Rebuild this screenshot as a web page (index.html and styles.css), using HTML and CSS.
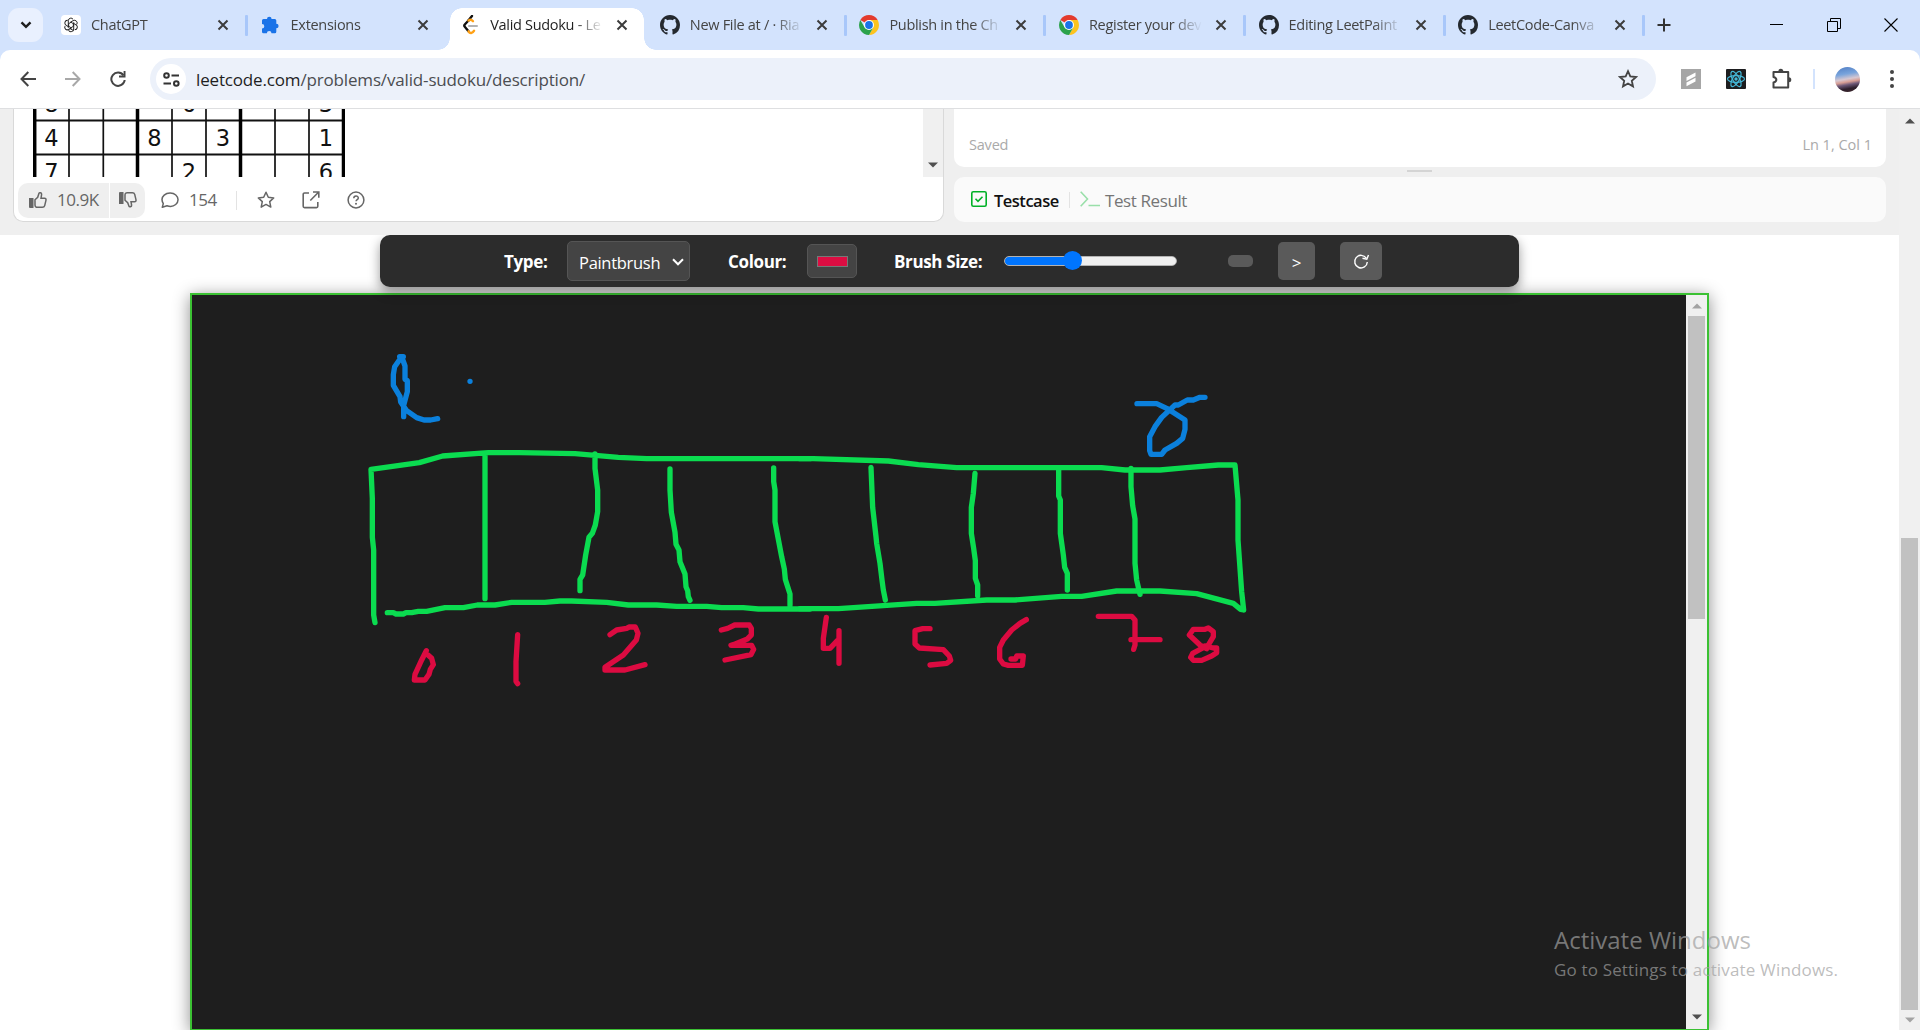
FILE: index.html
```html
<!DOCTYPE html>
<html lang="en">
<head>
<meta charset="utf-8">
<title>Valid Sudoku - LeetCode</title>
<link rel="stylesheet" href="styles.css">
</head>
<body>
<svg class="defs" width="0" height="0" aria-hidden="true">
  <symbol id="x" viewBox="0 0 12 12"><path d="M1.5 1.5l9 9M10.5 1.5l-9 9" stroke="currentColor" stroke-width="2" fill="none"/></symbol>
  <symbol id="github" viewBox="0 0 16 16"><path fill="#24292f" d="M8 0C3.58 0 0 3.58 0 8c0 3.54 2.29 6.53 5.47 7.59.4.07.55-.17.55-.38 0-.19-.01-.82-.01-1.49-2.01.37-2.53-.49-2.69-.94-.09-.23-.48-.94-.82-1.13-.28-.15-.68-.52-.01-.53.63-.01 1.08.58 1.23.82.72 1.21 1.87.87 2.33.66.07-.52.28-.87.51-1.07-1.78-.2-3.64-.89-3.64-3.95 0-.87.31-1.59.82-2.15-.08-.2-.36-1.02.08-2.12 0 0 .67-.21 2.2.82.64-.18 1.32-.27 2-.27s1.36.09 2 .27c1.53-1.04 2.2-.82 2.2-.82.44 1.1.16 1.92.08 2.12.51.56.82 1.27.82 2.15 0 3.07-1.87 3.75-3.65 3.95.29.25.54.73.54 1.48 0 1.07-.01 1.93-.01 2.2 0 .21.15.46.55.38A8.01 8.01 0 0 0 16 8c0-4.42-3.58-8-8-8z"/></symbol>
  <symbol id="chrome" viewBox="0 0 20 20"><path fill="#e33b2e" d="M10 10L1.34 5A10 10 0 0 1 18.66 5z"/><path fill="#fcc31e" d="M10 10V5h8.66A10 10 0 0 1 10 20l4.33-7.5z"/><path fill="#2ba24c" d="M10 10l4.33 2.5L10 20A10 10 0 0 1 1.34 5l4.33 7.5z"/><circle cx="10" cy="10" r="5" fill="#fff"/><circle cx="10" cy="10" r="3.9" fill="#1a73e8"/></symbol>
  <symbol id="up" viewBox="0 0 10 6"><path d="M0 5.5L5 .5l5 5z" fill="currentColor"/></symbol>
  <symbol id="down" viewBox="0 0 10 6"><path d="M0 .5l5 5 5-5z" fill="currentColor"/></symbol>
</svg>

<header class="browser">
  <div class="tabstrip">
    <button class="tab-search"><svg width="12" height="8" viewBox="0 0 12 8"><path d="M1.5 1.3L6 5.8l4.5-4.5" fill="none" stroke="#1f1f1f" stroke-width="2.4"/></svg></button>
    <div class="tabs">
      <div class="tab"><svg class="fav chip" viewBox="0 0 20 20"><g fill="none" stroke="#222" stroke-width="1.1"><g id="petal"><path d="M7 9V5.2a2.9 2.9 0 0 1 5.4-1.4M9 7.1l3.3-1.9a3 3 0 0 1 4 4.3"/></g><use href="#petal" transform="rotate(120 10 10)"/><use href="#petal" transform="rotate(240 10 10)"/><path d="M10 7l2.6 1.5v3L10 13l-2.6-1.5v-3zM7 9v4M9 14l3.5 2M13 11V7"/></g></svg><span class="title">ChatGPT</span><svg class="close"><use href="#x"/></svg></div>
      <div class="tab"><svg class="fav" viewBox="0 0 20 20"><path fill="#1a73e8" d="M1 5.500a1.500 1.500 0 0 1 1.500-1.500H6a2.300 2.300 0 0 1 4.600 0h3.200A1.500 1.500 0 0 1 15.300 5.500V8.700a2.300 2.300 0 0 1 0 4.600v3.500a1.500 1.500 0 0 1-1.500 1.500h-3.300a2.300 2.300 0 0 0-4.600 0H2.500A1.500 1.500 0 0 1 1 16.800v-3.300a2.300 2.300 0 0 0 0-4.600z"/></svg><span class="title">Extensions</span><svg class="close"><use href="#x"/></svg></div>
      <div class="tab active"><svg class="fav" viewBox="0 0 20 20" fill="none" stroke-width="2.4" stroke-linecap="round"><path d="M8.500 5.500L5 9.200a2 2 0 0 0 0 2.800l3.700 4.400" stroke="#111"/><path d="M12 .9L8.200 5.700" stroke="#111"/><path d="M8.500 5.600c1.600-1.200 3-1 4.500.6M8.500 16.300c1.400 2.500 4 2.200 5.600-.6" stroke="#ffa116"/><path d="M9 11h8" stroke="#b3b3b3" stroke-width="2"/></svg><span class="title">Valid Sudoku - Le</span><svg class="close"><use href="#x"/></svg></div>
      <div class="tab nosep"><svg class="fav"><use href="#github"/></svg><span class="title">New File at / · Ria</span><svg class="close"><use href="#x"/></svg></div>
      <div class="tab"><svg class="fav"><use href="#chrome"/></svg><span class="title">Publish in the Ch</span><svg class="close"><use href="#x"/></svg></div>
      <div class="tab"><svg class="fav"><use href="#chrome"/></svg><span class="title">Register your dev</span><svg class="close"><use href="#x"/></svg></div>
      <div class="tab"><svg class="fav"><use href="#github"/></svg><span class="title">Editing LeetPaint</span><svg class="close"><use href="#x"/></svg></div>
      <div class="tab"><svg class="fav"><use href="#github"/></svg><span class="title">LeetCode-Canva</span><svg class="close"><use href="#x"/></svg></div>
    </div>
    <svg class="plus" width="14" height="14" viewBox="0 0 14 14"><path d="M7 .5v13M.5 7h13" stroke="#333" stroke-width="2"/></svg>
    <div class="window-buttons">
      <svg width="14" height="14" viewBox="0 0 14 14"><path d="M0 6.500h13" stroke="#000"/></svg>
      <svg width="14" height="14" viewBox="0 0 14 14"><path d="M.5 3.500h10v10H.5zM3.500 3V.5h10v10H11" fill="none" stroke="#000"/></svg>
      <svg width="14" height="14" viewBox="0 0 14 14"><path d="M.5 .5l13 13M13.500 .5l-13 13" stroke="#000" stroke-width="1.100"/></svg>
    </div>
  </div>
  <div class="toolbar">
    <div class="nav">
      <svg width="16" height="16" viewBox="0 0 16 16"><path d="M8.300 1L1.500 8l6.800 7M1.500 8H16" fill="none" stroke="#444" stroke-width="2"/></svg>
      <svg width="16" height="16" viewBox="0 0 16 16"><path d="M7.700 1l6.800 7-6.800 7M14.500 8H0" fill="none" stroke="#a8a8a8" stroke-width="2"/></svg>
      <svg width="16" height="16" viewBox="0 0 16 16"><path d="M13.500 4.300A6.700 6.700 0 1 0 14.700 9" fill="none" stroke="#444" stroke-width="2"/><path d="M15.500 0v6.500H9V4.600h4.600V0z" fill="#444"/></svg>
    </div>
    <div class="omnibox">
      <span class="site"><svg width="17" height="15" viewBox="0 0 17 15" fill="none" stroke="#333" stroke-width="2"><circle cx="3.500" cy="3.500" r="2.300"/><path d="M8.500 3.500H16M.5 11.500H8"/><circle cx="13.300" cy="11.500" r="2.300"/></svg></span>
      <span class="url">leetcode.com<i>/problems/valid-sudoku/description/</i></span>
      <svg class="bookmark" width="20" height="20" viewBox="0 0 20 20"><path d="M10 2.200l2.300 5.200 5.700.6-4.200 3.800 1.200 5.600L10 14.500l-5 2.900 1.200-5.600L2 8l5.700-.6z" fill="none" stroke="#444" stroke-width="1.800"/></svg>
    </div>
    <div class="extensions">
      <svg width="20" height="20" viewBox="0 0 20 20"><rect width="20" height="20" fill="#a6a6a6"/><path d="M14.500 3.500v3.800L5.500 12V8.300zM14.500 8.700v3.800l-9 4.700v-3.800z" fill="#fff"/></svg>
      <svg width="20" height="20" viewBox="0 0 20 20"><rect width="20" height="20" rx="1" fill="#1d1d1f"/><g fill="none" stroke="#45b8d8" stroke-width="1.200"><ellipse cx="10" cy="10" rx="8.500" ry="3.300"/><ellipse cx="10" cy="10" rx="8.500" ry="3.300" transform="rotate(60 10 10)"/><ellipse cx="10" cy="10" rx="8.500" ry="3.300" transform="rotate(120 10 10)"/></g><circle cx="10" cy="10" r="1.700" fill="#45b8d8"/></svg>
      <svg width="22" height="22" viewBox="0 0 22 22"><path d="M2.500 4h14.700v15.500H2.500v-5c3.800-1 3.800-4.500 0-5.500z" fill="none" stroke="#444" stroke-width="2" stroke-linejoin="round"/><path d="M7.300 3.300a2.500 2.500 0 0 1 5 0zM17.800 9.300a2.500 2.500 0 0 1 0 5z" fill="#444"/></svg>
      <i class="bar"></i>
      <i class="avatar"></i>
      <svg width="6" height="20" viewBox="0 0 6 20" fill="#444"><circle cx="3" cy="3" r="2"/><circle cx="3" cy="10" r="2"/><circle cx="3" cy="17" r="2"/></svg>
    </div>
  </div>
</header>

<main class="page">
  <div class="content">
    <section class="workspace">
      <div class="description">
        <div class="problem">
          <svg class="sudoku" width="312" height="68" viewBox="33 109 312 68">
            <path d="M33 120.500h312M33 154.500h312" stroke="#111" stroke-width="2"/>
            <path d="M69 109v68M103.300 109v68M172 109v68M206 109v68M275 109v68M309 109v68" stroke="#111" stroke-width="1.700"/>
            <path d="M34.700 109v68M137.500 109v68M240.500 109v68M343.500 109v68" stroke="#000" stroke-width="3.500"/>
            <g class="digits"><text x="51.500" y="112">8</text><text x="189" y="112">6</text><text x="326" y="112">3</text><text x="51.500" y="145.500">4</text><text x="154.500" y="145.500">8</text><text x="223" y="145.500">3</text><text x="326" y="145.500">1</text><text x="51.500" y="180">7</text><text x="189" y="180">2</text><text x="326" y="180">6</text></g>
          </svg>
          <div class="inner-scroll"><svg class="arrow"><use href="#down"/></svg></div>
        </div>
        <div class="actions">
          <div class="votes">
            <span class="vote like"><svg width="18" height="18" viewBox="0 0 18 18"><path d="M0 7h4.500v10H1a1 1 0 0 1-1-1z" fill="#666"/><path d="M6 8.800l2.700-2.500L10 2.300c.3-.9 2.800-.9 2.600 1.200l-.6 3.800h3.600c1 0 1.600.8 1.400 1.800l-1.300 5.500c-.3 1.100-1.200 1.700-2.300 1.700H8.200A2.200 2.200 0 0 1 6 14.100z" fill="none" stroke="#666" stroke-width="1.500"/></svg><b>10.9K</b></span>
            <span class="vote"><svg width="18" height="18" viewBox="0 0 18 18"><path d="M0 2a1 1 0 0 1 1-1h3.500v12H0z" fill="#666"/><path d="M6 9.200l2.700 2.500L10 15.200c.3.900 2.800.9 2.600-1.200l-.6-3.300h3.600c1 0 1.600-.8 1.400-1.800l-1.300-5.500c-.3-1.100-1.200-1.700-2.300-1.700H8.200A2.200 2.200 0 0 0 6 3.900z" fill="none" stroke="#666" stroke-width="1.500"/></svg></span>
          </div>
          <span class="comments"><svg width="18" height="17" viewBox="0 0 18 17"><path d="M1.300 15.200l1-3.600C.5 8.600.5 5.500 3.200 3.100 6.300.3 11.900.3 14.800 3c3 2.700 3 7-.1 9.500-2.300 1.900-5.700 2.300-8.700 1.200z" fill="none" stroke="#666" stroke-width="1.500" stroke-linejoin="round"/></svg><b>154</b></span>
          <i class="rule"></i>
          <div class="links">
            <svg width="18" height="18" viewBox="0 0 18 18"><path d="M9 1.200l2.300 5 5.400.7-4 3.700 1.100 5.500L9 13.400l-4.800 2.700 1.100-5.500-4-3.700 5.400-.7z" fill="none" stroke="#666" stroke-width="1.500" stroke-linejoin="round"/></svg>
            <svg width="18" height="18" viewBox="0 0 18 18"><path d="M7 2H2.500A1.300 1.300 0 0 0 1.200 3.300v12a1.300 1.300 0 0 0 1.300 1.300h12a1.300 1.300 0 0 0 1.300-1.300V11M11 1h5.800v5.800M16.500 1.300L8.300 9.500" fill="none" stroke="#666" stroke-width="1.600"/></svg>
            <svg width="18" height="18" viewBox="0 0 18 18"><circle cx="9" cy="9" r="7.900" fill="none" stroke="#666" stroke-width="1.500"/><path d="M6.800 7.200c0-3 4.500-2.900 4.500-.2 0 1.600-2.200 1.600-2.200 3.300" fill="none" stroke="#666" stroke-width="1.500"/><circle cx="9" cy="12.700" r="1" fill="#666"/></svg>
          </div>
        </div>
      </div>
      <div class="right">
        <div class="editor"><span class="saved">Saved</span><span class="cursor">Ln 1, Col 1</span></div>
        <i class="handle"></i>
        <div class="testbar">
          <svg width="16" height="16" viewBox="0 0 16 16"><rect x=".8" y=".8" width="14.400" height="14.400" rx="1.500" fill="none" stroke="#02b128" stroke-width="1.600"/><path d="M4.500 7.800l2.500 2.500 4.500-4.500" fill="none" stroke="#02b128" stroke-width="1.600"/></svg>
          <b class="testcase">Testcase</b>
          <i class="rule"></i>
          <svg class="prompt" width="20" height="16" viewBox="0 0 20 16"><path d="M.7 .7L7.500 8 .7 15.200M8.500 14.500H20" fill="none" stroke="#99dfa9" stroke-width="1.600"/></svg>
          <span class="result">Test Result</span>
        </div>
      </div>
    </section>

    <section class="paint">
      <div class="controls">
        <label class="type">Type:</label>
        <div class="select"><span>Paintbrush</span><svg width="12" height="8" viewBox="0 0 12 8"><path d="M1 1.300l5 5 5-5" fill="none" stroke="#fff" stroke-width="2"/></svg></div>
        <label class="colour">Colour:</label>
        <div class="swatch"><i></i></div>
        <label class="size">Brush Size:</label>
        <div class="slider"><i class="thumb"></i></div>
        <i class="pill"></i>
        <button class="btn next">&gt;</button>
        <button class="btn reload"><svg width="18" height="18" viewBox="0 0 18 18"><path d="M14.300 5.200A6.300 6.300 0 1 0 15.300 9" fill="none" stroke="#fff" stroke-width="1.400"/><path d="M10.500 5.300l4.300 1L16.500 2" fill="none" stroke="#fff" stroke-width="1.400"/></svg></button>
      </div>
      <div class="board">
        <svg class="drawing" viewBox="192 295 1494 734" width="1494" height="734">
          <g transform="translate(360 340) scale(.33333)">
            <g class="blue"><path d="M131 230V196L142 155V122L135 118V78L125 50 104 80 100 104V136L120 170 122 186 140 212 170 233 192 240H212L233 236M119 50H130M330 124h.1"/></g>
            <g class="green"><path d="M45 848L41 825V630L37 592V475L33 388 178 368 248 348 385 338H480L645 341 775 352 860 356H1350M375 340V776M705 342V385L713 450V515L706 555 697 580 687 592 677 645 668 705 660 718V752M930 387V450L934 517 945 577 948 613 957 630 960 665 975 702 978 740 983 752 985 770 990 781M1241 384V425L1245 450V545L1265 650 1273 687 1276 718 1290 762V795M82 818H100L108 822H130L138 818H155L175 814H200L255 803H310L352 795H405L455 787H555L600 783H635L740 787 805 795H890L950 799H1040L1085 803H1150L1195 807H1350"/></g>
            <g class="red"><path d="M199 932L185 960 165 1003 163 1020H195L207 1003 211 988 220 974 215 955 204 945M473 884L468 965V1024L473 1031M750 884L770 870 800 865 808 861H826L834 880 829 900 790 945 735 982V990H795L855 974M1084 870L1103 865 1124 855H1168L1174 865V885L1162 897 1120 914 1113 916H1175L1181 928 1173 944 1095 960"/></g>
          </g>
          <g transform="translate(800 370) scale(.33333)">
            <g class="green"><path d="M0 266H40L265 273 355 284 470 293H905L975 300H1080L1160 293 1255 285H1305L1314 390V510L1325 665 1331 720 1322 718 1300 700 1190 671 1080 663H950L845 679H785L645 690H560L405 700H350L115 716H0M213 292L218 412 228 500 230 520 240 580 246 630 250 660 256 690M525 310L520 370 514 412V490L521 535 526 572V625L533 645V677M776 295V378L781 390V490L790 555 794 592 802 610V660M993 295V350L998 407 1005 447V580L1010 630 1020 673"/></g>
            <g class="red"><path d="M79 742L70 805V835H90L112 812M117 782V880M390 776H368L345 782V822L358 834 430 839 448 858 452 871 440 880 390 885M679 749L660 760 635 780 610 810 599 832V867L610 882 625 886H667L670 858H650L647 867H633M895 739H995L1005 750V825L1001 838M993 809H1080M1220 836L1200 825 1168 795 1180 778H1215L1225 774 1240 785V800L1225 825 1178 850 1172 862 1180 871H1205L1235 858 1250 848V834H1240L1215 828"/></g>
            <g class="blue"><path d="M1011 101H1070L1100 115 1155 150V178L1148 205 1130 220 1095 240 1085 253H1053L1049 242V200L1065 170 1085 142 1125 105H1135L1162 90H1180L1200 82H1215"/></g>
          </g>
        </svg>
        <div class="board-scroll"><svg class="arrow light"><use href="#up"/></svg><i class="knob"></i><svg class="arrow"><use href="#down"/></svg></div>
      </div>
    </section>
  </div>
  <div class="page-scroll"><svg class="arrow"><use href="#up"/></svg><i class="knob"></i><svg class="arrow light"><use href="#down"/></svg></div>
</main>
<div class="watermark"><p class="wm-title">Activate Windows</p><p class="wm-text">Go to Settings to activate Windows.</p></div>
</body>
</html>
```
FILE: styles.css
```css
* { box-sizing: border-box; }
body { margin: 0; width: 1920px; height: 1030px; overflow: hidden; display: flex; flex-direction: column; background: #fff; font-family: "Open Sans", "Noto Sans", sans-serif; position: relative; }
button { border: 0; padding: 0; font: inherit; }
svg { display: block; flex: none; }
i { font-style: normal; flex: none; }
.defs { position: absolute; }

/* Tab strip */
.browser { height: 109px; flex: none; background: #d3e3fd; border-bottom: 1px solid #dedfe1; }
.tabstrip { height: 50px; display: flex; align-items: center; padding-left: 8px; }
.tab-search { width: 35px; height: 34px; border-radius: 11px; background: #e9f0fe; display: grid; place-items: center; }
.tabs { display: flex; margin-left: 8px; height: 50px; }
.tab { width: 199.6px; height: 42px; margin-top: 8px; padding: 0 0 8px 10px; display: flex; align-items: center; position: relative; color: #444; }
.fav { width: 20px; height: 20px; }
.chip { background: #fff; border-radius: 4px; padding: 1px; }
.title { width: 118px; margin-left: 10px; white-space: nowrap; font-size: 14.5px; letter-spacing: -.3px; line-height: 22px; mask-image: linear-gradient(90deg, #000 84px, transparent 113px); }
.close { width: 12px; height: 12px; margin-left: 8px; color: #3c3c3c; }
.tab::after { content: ""; position: absolute; left: 194px; top: 7px; width: 3px; height: 21px; border-radius: 1px; background: #a8c7fa; }
.tab.active, .tab:has(+ .active) { z-index: 1; }
.tab:has(+ .active)::after, .tab.active::after { display: none; }
.tab.active { color: #1f1f1f; }
.tab.active::before { content: ""; position: absolute; z-index: -1; left: -12px; right: -6px; top: 0; bottom: 0; background: radial-gradient(circle at 0 0, transparent 11.5px, #fff 12px) 0 100% / 12px 12px no-repeat, radial-gradient(circle at 100% 0, transparent 11.5px, #fff 12px) 100% 100% / 12px 12px no-repeat, linear-gradient(#fff, #fff) 12px 12px / calc(100% - 24px) 100% no-repeat, radial-gradient(circle at 12px 12px, #fff 11.5px, transparent 12px) 12px 0 / 12px 12px no-repeat, radial-gradient(circle at 0 12px, #fff 11.5px, transparent 12px) calc(100% - 12px) 0 / 12px 12px no-repeat, linear-gradient(#fff, #fff) 24px 0 / calc(100% - 48px) 12px no-repeat; }
.plus { margin-left: 9px; }
.window-buttons { display: flex; gap: 43px; margin-left: 99px; }

/* Address bar */
.toolbar { height: 58px; background: #fff; border-radius: 10px 10px 0 0; display: flex; align-items: center; padding-left: 20px; }
.nav { display: flex; gap: 29px; width: 130px; }
.omnibox { width: 1506px; height: 42px; border-radius: 21px; background: #ecf1fa; display: flex; align-items: center; padding: 0 18px 0 6px; }
.site { width: 30px; height: 30px; border-radius: 50%; background: #fff; display: grid; place-items: center; }
.url { margin-left: 10px; font-size: 17px; letter-spacing: -.16px; color: #1f1f1f; flex: 1; white-space: nowrap; }
.url i { color: #4b4d51; }
.extensions { display: flex; align-items: center; margin-left: 25px; }
.extensions svg + svg { margin-left: 25px; }
.extensions .bar { width: 2px; height: 20px; background: #d3e3fd; margin: 0 20px 0 20px; }
.avatar { width: 25px; height: 25px; border-radius: 50%; background: linear-gradient(170deg, #4f7dc4 0, #79a4dc 30%, #d7c7d0 48%, #d89e94 58%, #6d5877 68%, #2d1f2c 82%, #42292c); }
.extensions .avatar + svg { margin-left: 29px; }

/* Page */
.page { flex: 1; min-height: 0; display: flex; }
.content { width: 1899px; display: flex; flex-direction: column; }
.workspace { height: 126px; flex: none; background: #efefef; display: flex; padding-left: 13px; gap: 10px; }
.description { width: 931px; height: 113px; background: #fff; border: 1px solid #d9d9d9; border-top: 0; border-radius: 0 0 10px 10px; }
.problem { height: 68px; display: flex; justify-content: space-between; padding-left: 19px; }
.digits { font: 22.500px "DejaVu Sans", sans-serif; text-anchor: middle; fill: #111; }
.inner-scroll { width: 20px; background: #f0f0f0; display: flex; flex-direction: column; justify-content: flex-end; align-items: center; padding-bottom: 9px; }
.arrow { width: 10px; height: 6px; color: #505050; }
.arrow.light { color: #a3a3a3; }
.actions { height: 45px; display: flex; align-items: center; padding: 1px 0 0 4px; color: #666; }
.actions b { font-weight: 400; font-size: 17px; letter-spacing: -.5px; line-height: 24px; }
.votes { display: flex; gap: 1px; height: 35px; }
.vote { width: 35px; display: flex; align-items: center; justify-content: center; background: #efefef; border-radius: 0 10px 10px 0; }
.vote.like { width: 91px; justify-content: flex-start; gap: 10px; padding-left: 11px; border-radius: 10px 0 0 10px; }
.comments { display: flex; align-items: center; gap: 10px; width: 75px; margin-left: 16px; }
.rule { width: 1px; height: 19px; background: #e3e3e3; }
.links { display: flex; gap: 27px; margin-left: 20px; }
.right { width: 932px; }
.editor { height: 58px; background: #fff; border-radius: 0 0 10px 10px; display: flex; justify-content: space-between; align-items: flex-end; padding: 0 14px 13px 15px; color: #aaa; font-size: 14.500px; }
.saved { letter-spacing: -.2px; }
.cursor { letter-spacing: 0; }
.handle { display: block; width: 25px; height: 2px; margin: 3px 0 5px 453px; background: #d4d4d4; }
.testbar { height: 45px; background: #fafafa; border-radius: 10px; display: flex; align-items: center; padding: 1px 0 0 17px; font-size: 17px; }
.testbar svg { margin-bottom: 3px; }
.testcase { font-weight: 600; color: #111; width: 66px; margin-left: 7px; font-size: 16.500px; letter-spacing: -.5px; }
.testbar .rule { margin: 0 10px 0 9px; height: 16px; }
.result { color: #757575; margin-left: 5px; letter-spacing: -.4px; }

/* Paint overlay */
.paint { flex: 1; min-height: 0; display: flex; flex-direction: column; align-items: center; background: #fff; }
.controls { width: 1139px; height: 52px; flex: none; background: #2c2c2c; border-radius: 10px; box-shadow: 0 5px 12px rgba(0,0,0,.4); clip-path: inset(0 -30px -30px -30px); display: flex; align-items: center; padding-left: 124px; color: #fff; }
.controls label { font-size: 17px; font-weight: 700; letter-spacing: -.35px; white-space: nowrap; padding-top: 1px; }
.type { width: 63px; }
.select { width: 123px; height: 40px; background: #444; border: 1px solid #555; border-radius: 5px; display: flex; align-items: center; justify-content: space-between; padding: 2px 5px 0 11px; font-size: 16.500px; letter-spacing: -.3px; }
.colour { width: 79px; margin-left: 38px; }
.swatch { width: 50px; height: 34px; border: 1px solid #555; border-radius: 5px; background: #444; display: grid; place-items: center; }
.swatch i { width: 31px; height: 11px; background: #dc0d42; border: 1px solid #777; }
.size { width: 110px; margin-left: 37px; }
.slider { width: 173px; height: 10px; border: 1px solid #b2b2b2; border-radius: 5px; background: linear-gradient(90deg, #0075ff 68px, #efefef 68px); position: relative; }
.thumb { position: absolute; left: 58px; top: -6px; width: 19px; height: 19px; border-radius: 50%; background: #0075ff; }
.pill { width: 25px; height: 12px; border-radius: 5px; background: #5a5a5a; margin-left: 51px; }
.btn { height: 38px; border-radius: 5px; background: #5a5a5a; color: #fff; display: grid; place-items: center; font-size: 17px; }
.next { width: 37px; margin-left: 25px; padding-top: 2px; }
.reload { width: 42px; margin-left: 25px; padding-top: 2px; }
.board { width: 1519px; height: 737px; margin-top: 6px; border: 2px solid #3bc133; border-bottom-width: 1px; background: #1e1e1e; display: flex; box-shadow: 0 3px 16px rgba(0,0,0,.45); z-index: 1; position: relative; }
.drawing { fill: none; stroke-width: 16; stroke-linecap: round; stroke-linejoin: round; }
.blue { stroke: #0b80dc; }
.green { stroke: #0bdc50; }
.red { stroke: #dc0b41; }
.controls { position: relative; z-index: 2; }
.board-scroll, .page-scroll { width: 21px; background: #f0f0f0; display: flex; flex-direction: column; align-items: center; }
.board-scroll { padding: 8px 0 9px; justify-content: space-between; }
.knob { width: 17px; background: #c1c1c1; }
.board-scroll .knob { height: 303px; margin: 7px 0 auto; }
.page-scroll { padding: 9px 0 7px; }
.page-scroll .knob { height: 472px; margin: auto 0 7px; }

.watermark { position: absolute; z-index: 5; left: 1554px; top: 922px; color: rgba(160,160,160,.7); white-space: nowrap; }
.watermark p { margin: 0; }
.wm-title { font-size: 24px; line-height: 36px; }
.wm-text { font-size: 17px; line-height: 24px; letter-spacing: .16px; }
```
